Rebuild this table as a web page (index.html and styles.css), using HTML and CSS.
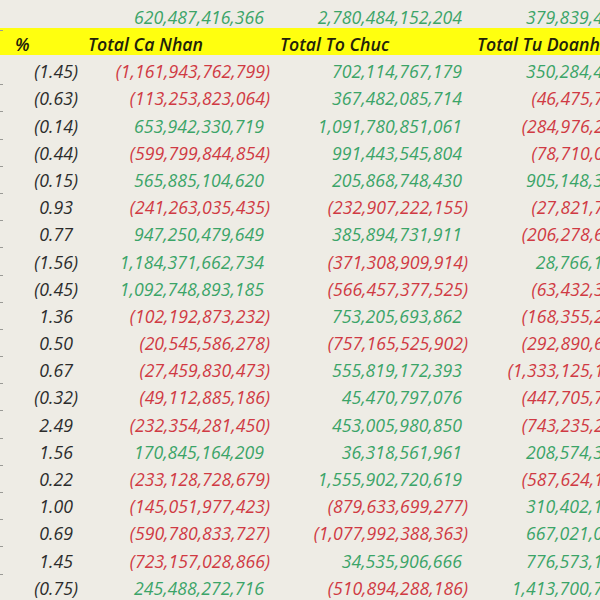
FILE: index.html
```html
<!DOCTYPE html>
<html>
<head>
<meta charset="utf-8">
<link rel="stylesheet" href="styles.css">
</head>
<body>
<div class="sheet">
  <div class="row">
    <div class="edge"></div><div class="c a"></div>
    <div class="c n g pos">620,487,416,366</div>
    <div class="c n g pos">2,780,484,152,204</div>
    <div class="c n g pos">379,839,425,118</div>
  </div>
  <div class="row head">
    <div class="edge"></div>
    <div class="c h ha">%</div>
    <div class="c h hb">Total Ca Nhan</div>
    <div class="c h hc">Total To Chuc</div>
    <div class="c h hd">Total Tu Doanh</div>
  </div>
  <div class="row"><div class="edge"></div><div class="c a">(1.45)</div><div class="c n r">(1,161,943,762,799)</div><div class="c n g pos">702,114,767,179</div><div class="c n g pos">350,284,462,115</div></div>
  <div class="row"><div class="edge"></div><div class="c a">(0.63)</div><div class="c n r">(113,253,823,064)</div><div class="c n g pos">367,482,085,714</div><div class="c n r">(46,475,712,338)</div></div>
  <div class="row"><div class="edge"></div><div class="c a">(0.14)</div><div class="c n g pos">653,942,330,719</div><div class="c n g pos">1,091,780,851,061</div><div class="c n r">(284,976,213,470)</div></div>
  <div class="row"><div class="edge"></div><div class="c a">(0.44)</div><div class="c n r">(599,799,844,854)</div><div class="c n g pos">991,443,545,804</div><div class="c n r">(78,710,045,236)</div></div>
  <div class="row"><div class="edge"></div><div class="c a">(0.15)</div><div class="c n g pos">565,885,104,620</div><div class="c n g pos">205,868,748,430</div><div class="c n g pos">905,148,327,604</div></div>
  <div class="row"><div class="edge"></div><div class="c a pos">0.93</div><div class="c n r">(241,263,035,435)</div><div class="c n r">(232,907,222,155)</div><div class="c n r">(27,821,736,410)</div></div>
  <div class="row"><div class="edge"></div><div class="c a pos">0.77</div><div class="c n g pos">947,250,479,649</div><div class="c n g pos">385,894,731,911</div><div class="c n r">(206,278,634,182)</div></div>
  <div class="row"><div class="edge"></div><div class="c a">(1.56)</div><div class="c n g pos">1,184,371,662,734</div><div class="c n r">(371,308,909,914)</div><div class="c n g pos">28,766,184,290</div></div>
  <div class="row"><div class="edge"></div><div class="c a">(0.45)</div><div class="c n g pos">1,092,748,893,185</div><div class="c n r">(566,457,377,525)</div><div class="c n r">(63,432,318,074)</div></div>
  <div class="row"><div class="edge"></div><div class="c a pos">1.36</div><div class="c n r">(102,192,873,232)</div><div class="c n g pos">753,205,693,862</div><div class="c n r">(168,355,207,913)</div></div>
  <div class="row"><div class="edge"></div><div class="c a pos">0.50</div><div class="c n r">(20,545,586,278)</div><div class="c n r">(757,165,525,902)</div><div class="c n r">(292,890,614,527)</div></div>
  <div class="row"><div class="edge"></div><div class="c a pos">0.67</div><div class="c n r">(27,459,830,473)</div><div class="c n g pos">555,819,172,393</div><div class="c n r">(1,333,125,146,802)</div></div>
  <div class="row"><div class="edge"></div><div class="c a">(0.32)</div><div class="c n r">(49,112,885,186)</div><div class="c n g pos">45,470,797,076</div><div class="c n r">(447,705,731,659)</div></div>
  <div class="row"><div class="edge"></div><div class="c a pos">2.49</div><div class="c n r">(232,354,281,450)</div><div class="c n g pos">453,005,980,850</div><div class="c n r">(743,235,298,011)</div></div>
  <div class="row"><div class="edge"></div><div class="c a pos">1.56</div><div class="c n g pos">170,845,164,209</div><div class="c n g pos">36,318,561,961</div><div class="c n g pos">208,574,356,148</div></div>
  <div class="row"><div class="edge"></div><div class="c a pos">0.22</div><div class="c n r">(233,128,728,679)</div><div class="c n g pos">1,555,902,720,619</div><div class="c n r">(587,624,190,375)</div></div>
  <div class="row"><div class="edge"></div><div class="c a pos">1.00</div><div class="c n r">(145,051,977,423)</div><div class="c n r">(879,633,699,277)</div><div class="c n g pos">310,402,158,633</div></div>
  <div class="row"><div class="edge"></div><div class="c a pos">0.69</div><div class="c n r">(590,780,833,727)</div><div class="c n r">(1,077,992,388,363)</div><div class="c n g pos">667,021,043,925</div></div>
  <div class="row"><div class="edge"></div><div class="c a pos">1.45</div><div class="c n r">(723,157,028,866)</div><div class="c n g pos">34,535,906,666</div><div class="c n g pos">776,573,162,480</div></div>
  <div class="row"><div class="edge"></div><div class="c a">(0.75)</div><div class="c n g pos">245,488,272,716</div><div class="c n r">(510,894,288,186)</div><div class="c n g pos">1,413,700,749,302</div></div>
</div>
</body>
</html>
```

FILE: styles.css
```css
html, body {
  margin: 0;
  padding: 0;
  width: 600px;
  height: 600px;
  overflow: hidden;
  background: #eeece5;
}

.sheet {
  padding-top: 1px;
  font-family: "Open Sans", "DejaVu Sans", sans-serif;
  font-style: italic;
  font-size: 17.7px;
}

.row {
  display: grid;
  grid-template-columns: 3px 80px 189px 198px 194px;
  height: 27.2px;
  align-items: center;
  width: 664px;
}

.edge {
  align-self: stretch;
  border-bottom: 1px solid #9a9a96;
  box-sizing: border-box;
}

.c {
  white-space: nowrap;
  line-height: 27px;
  padding-top: 3px;
  overflow: visible;
}

.a {
  text-align: right;
  color: #2c2c2c;
  padding-right: 5px;
}

.n {
  text-align: right;
  padding-right: 2px;
}

.pos {
  padding-right: 8px;
}

.a.pos {
  padding-right: 10px;
}

.g { color: #3ba468; }
.r { color: #d03a43; }

.head {
  background: #ffff0f;
  height: 27px;
}

.head .edge {
  border-bottom: none;
}

.h {
  font-weight: 600;
  color: #22220a;
  text-align: left;
}

.ha { padding-left: 12px; }
.hb { padding-left: 5px; }
.hc { padding-left: 8px; }
.hd { padding-left: 7px; }
```
